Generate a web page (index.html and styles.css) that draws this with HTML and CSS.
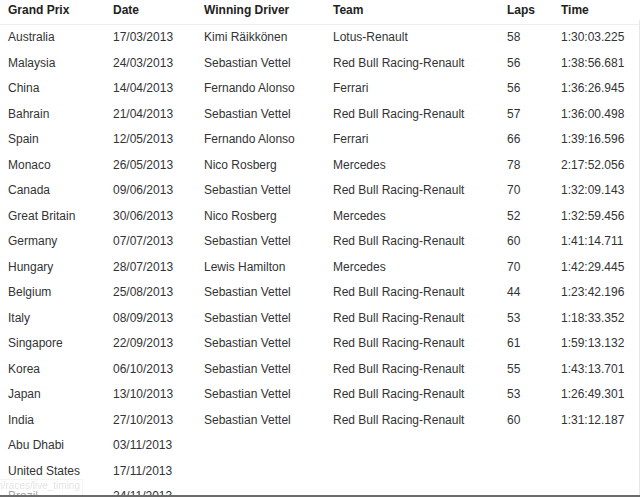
FILE: index.html
```html
<!DOCTYPE html>
<html>
<head>
<meta charset="utf-8">
<link rel="stylesheet" href="styles.css">
</head>
<body>
<table class="results">
  <colgroup>
    <col class="c-gp"><col class="c-date"><col class="c-driver"><col class="c-team"><col class="c-laps"><col class="c-time">
  </colgroup>
  <thead>
    <tr><th>Grand Prix</th><th>Date</th><th>Winning Driver</th><th>Team</th><th>Laps</th><th>Time</th></tr>
  </thead>
  <tbody>
    <tr><td>Australia</td><td>17/03/2013</td><td>Kimi Räikkönen</td><td>Lotus-Renault</td><td>58</td><td>1:30:03.225</td></tr>
    <tr><td>Malaysia</td><td>24/03/2013</td><td>Sebastian Vettel</td><td>Red Bull Racing-Renault</td><td>56</td><td>1:38:56.681</td></tr>
    <tr><td>China</td><td>14/04/2013</td><td>Fernando Alonso</td><td>Ferrari</td><td>56</td><td>1:36:26.945</td></tr>
    <tr><td>Bahrain</td><td>21/04/2013</td><td>Sebastian Vettel</td><td>Red Bull Racing-Renault</td><td>57</td><td>1:36:00.498</td></tr>
    <tr><td>Spain</td><td>12/05/2013</td><td>Fernando Alonso</td><td>Ferrari</td><td>66</td><td>1:39:16.596</td></tr>
    <tr><td>Monaco</td><td>26/05/2013</td><td>Nico Rosberg</td><td>Mercedes</td><td>78</td><td>2:17:52.056</td></tr>
    <tr><td>Canada</td><td>09/06/2013</td><td>Sebastian Vettel</td><td>Red Bull Racing-Renault</td><td>70</td><td>1:32:09.143</td></tr>
    <tr><td>Great Britain</td><td>30/06/2013</td><td>Nico Rosberg</td><td>Mercedes</td><td>52</td><td>1:32:59.456</td></tr>
    <tr><td>Germany</td><td>07/07/2013</td><td>Sebastian Vettel</td><td>Red Bull Racing-Renault</td><td>60</td><td>1:41:14.711</td></tr>
    <tr><td>Hungary</td><td>28/07/2013</td><td>Lewis Hamilton</td><td>Mercedes</td><td>70</td><td>1:42:29.445</td></tr>
    <tr><td>Belgium</td><td>25/08/2013</td><td>Sebastian Vettel</td><td>Red Bull Racing-Renault</td><td>44</td><td>1:23:42.196</td></tr>
    <tr><td>Italy</td><td>08/09/2013</td><td>Sebastian Vettel</td><td>Red Bull Racing-Renault</td><td>53</td><td>1:18:33.352</td></tr>
    <tr><td>Singapore</td><td>22/09/2013</td><td>Sebastian Vettel</td><td>Red Bull Racing-Renault</td><td>61</td><td>1:59:13.132</td></tr>
    <tr><td>Korea</td><td>06/10/2013</td><td>Sebastian Vettel</td><td>Red Bull Racing-Renault</td><td>55</td><td>1:43:13.701</td></tr>
    <tr><td>Japan</td><td>13/10/2013</td><td>Sebastian Vettel</td><td>Red Bull Racing-Renault</td><td>53</td><td>1:26:49.301</td></tr>
    <tr><td>India</td><td>27/10/2013</td><td>Sebastian Vettel</td><td>Red Bull Racing-Renault</td><td>60</td><td>1:31:12.187</td></tr>
    <tr><td>Abu Dhabi</td><td>03/11/2013</td><td></td><td></td><td></td><td></td></tr>
    <tr><td>United States</td><td>17/11/2013</td><td></td><td></td><td></td><td></td></tr>
    <tr><td>Brazil</td><td>24/11/2013</td><td></td><td></td><td></td><td></td></tr>
  </tbody>
</table>
<div class="statusbar">m/races/live_timing/</div>
<div class="edge-right"></div>
<div class="edge-bottom"></div>
</body>
</html>
```

FILE: styles.css
```css
html, body {
  margin: 0;
  padding: 0;
  background: #fff;
  overflow: hidden;
  height: 497px;
}
body {
  font-family: "Liberation Sans", Arial, sans-serif;
  font-size: 12px;
  color: #333;
}
.results {
  border-collapse: collapse;
  width: 640px;
  table-layout: fixed;
}
.c-gp { width: 105px; }
.c-date { width: 91px; }
.c-driver { width: 129px; }
.c-team { width: 174px; }
.c-laps { width: 54px; }
.c-time { width: 87px; }
.results th {
  text-align: left;
  font-weight: bold;
  color: #222;
  padding: 3px 8px 0 8px;
  height: 21px;
  line-height: 14px;
  vertical-align: top;
  border-bottom: 1px solid #eee;
  box-sizing: content-box;
}
.results td {
  padding: 6px 8px;
  line-height: 13.5px;
  white-space: nowrap;
}
.statusbar {
  position: fixed;
  left: 0;
  bottom: 2px;
  width: 78px;
  height: 15px;
  padding: 0 2px;
  background: rgba(255,255,255,0.55);
  border: 1px solid #f4f4f4;
  border-left: none;
  border-bottom: none;
  color: #e4e4e4;
  font-size: 10px;
  line-height: 12px;
  overflow: hidden;
  white-space: nowrap;
  direction: rtl;
  text-align: left;
}
.edge-right {
  position: fixed;
  top: 20px;
  right: 0;
  width: 1px;
  bottom: 0;
  background: #e6e6e6;
}
.edge-bottom {
  position: fixed;
  left: 0;
  right: 0;
  bottom: 0;
  height: 2px;
  background: #6b6b6b;
}
```
